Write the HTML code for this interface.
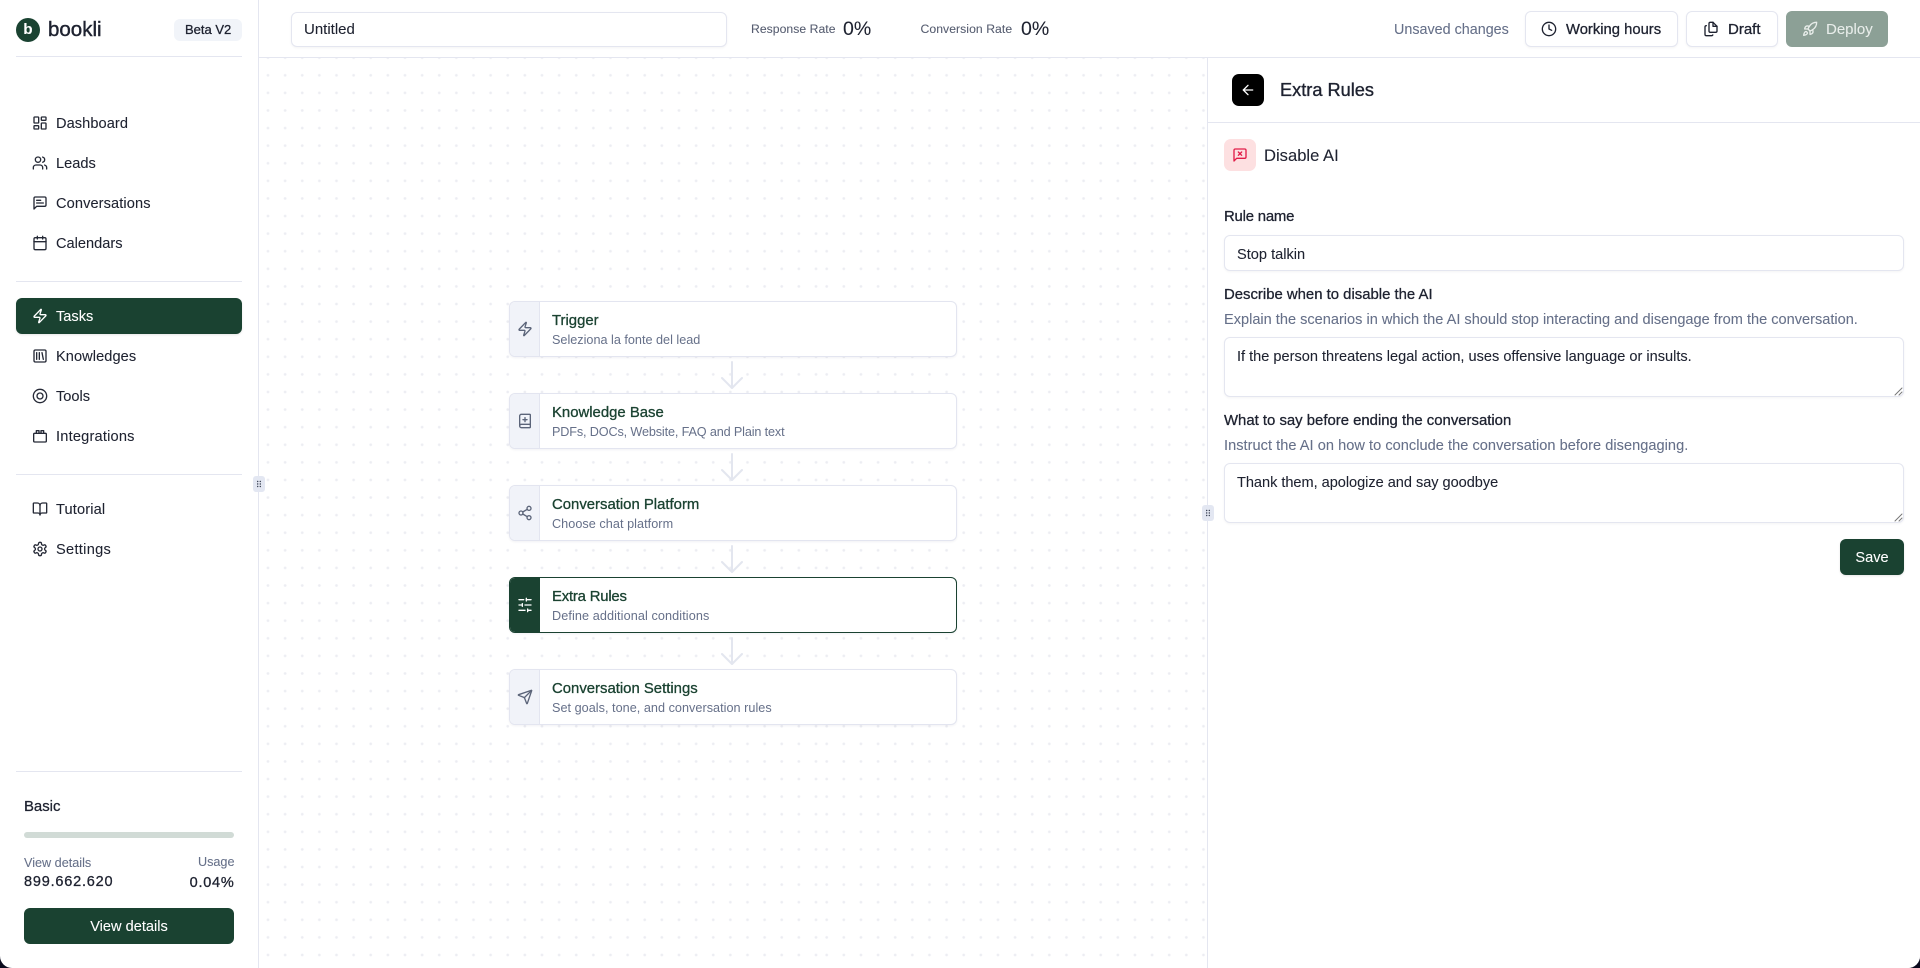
<!DOCTYPE html>
<html><head><meta charset="utf-8"><title>bookli</title>
<style>
*{box-sizing:border-box;margin:0;padding:0}
html,body{width:1920px;height:968px;overflow:hidden;background:#0b0b1e}
body{font-family:"Liberation Sans",Arial,sans-serif;color:#1e2230}
#app{position:absolute;left:0;top:0;width:1920px;height:968px;background:#fff;border-radius:0 0 12px 12px;overflow:hidden}
.a{position:absolute}
.t{position:absolute;white-space:nowrap;line-height:20px;height:20px;font-size:14.6px;letter-spacing:0;margin-top:1px;-webkit-text-stroke:.08px currentColor}
.n{margin-top:0}
.m{font-size:14.9px;font-weight:400;-webkit-text-stroke:.3px currentColor}
.ln{position:absolute;background:#e4e6f0}
svg{position:absolute;fill:none;stroke:currentColor;stroke-width:2;stroke-linecap:round;stroke-linejoin:round}
.nv svg{width:16px;height:16px;left:32px;color:#252936}
.box{position:absolute;background:#fff;border:1px solid #e4e6f0;border-radius:6px;box-shadow:0 1px 2px rgba(30,35,60,.05)}
.card{position:absolute;left:509px;width:448px;height:56px;background:#fff;border:1px solid #e3e5f0;border-radius:6px;overflow:hidden;box-shadow:0 1px 2px rgba(30,35,60,.06)}
.card i{position:absolute;left:0;top:0;bottom:0;width:30px;background:#f1f3f9;border-right:1px solid #e3e5f0}
.card svg{left:7px;top:19px;width:16px;height:16px;color:#5b6479}
.card b{position:absolute;left:42px;top:9px;line-height:20px;font-size:14.9px;font-weight:400;color:#1a4231;white-space:nowrap;-webkit-text-stroke:.3px #1a4231}
.card span{position:absolute;left:42px;top:28px;line-height:20px;font-size:12.65px;color:#667089;white-space:nowrap}
.arr{left:720px;width:24px;height:28px;color:#e3e6ef;stroke-width:2}
.sub{color:#667089}
.dots{position:absolute;top:58px;height:910px;background-image:radial-gradient(circle at center,#ebebf1 0,#eeeff4 1.1px,rgba(255,255,255,0) 1.7px);background-size:17.14px 17.6px}
</style></head><body>
<div id="app">
<!-- canvas -->
<div class="dots" style="left:259px;width:561px;background-position:.43px 8.5px"></div>
<div class="dots" style="left:820px;width:387px;background-position:-1.87px 8.5px"></div>

<!-- sidebar -->
<div class="ln" style="left:258px;top:0;width:1px;height:968px"></div>
<div class="a" style="left:16px;top:18px;width:24px;height:24px;border-radius:50%;background:#1a4231"></div>
<div class="t n" style="left:16px;top:20px;width:24px;text-align:center;color:#fff;font-weight:700;font-size:15px">b</div>
<div class="t m n" style="left:48px;top:20px;font-size:20.5px;-webkit-text-stroke:.4px #1e2230;color:#1e2230">bookli</div>
<div class="a" style="left:174px;top:19px;width:68px;height:22px;border-radius:6px;background:#f1f4f9"></div>
<div class="t m n" style="left:185px;top:20px;font-size:13px">Beta V2</div>
<div class="ln" style="left:16px;top:56px;width:226px;height:1px"></div>

<div class="nv">
<svg viewBox="0 0 24 24" style="top:115px"><rect x="3" y="3" width="7" height="9" rx="1"/><rect x="14" y="3" width="7" height="5" rx="1"/><rect x="14" y="12" width="7" height="9" rx="1"/><rect x="3" y="16" width="7" height="5" rx="1"/></svg>
<div class="t" style="left:56px;top:113px;letter-spacing:.07px">Dashboard</div>
<svg viewBox="0 0 24 24" style="top:155px"><path d="M16 21v-2a4 4 0 0 0-4-4H6a4 4 0 0 0-4 4v2"/><circle cx="9" cy="7" r="4"/><path d="M22 21v-2a4 4 0 0 0-3-3.87"/><path d="M16 3.13a4 4 0 0 1 0 7.75"/></svg>
<div class="t" style="left:56px;top:153px">Leads</div>
<svg viewBox="0 0 24 24" style="top:195px"><path d="M21 15a2 2 0 0 1-2 2H7l-4 4V5a2 2 0 0 1 2-2h14a2 2 0 0 1 2 2z"/><path d="M13 8H7"/><path d="M17 12H7"/></svg>
<div class="t" style="left:56px;top:193px;letter-spacing:.1px">Conversations</div>
<svg viewBox="0 0 24 24" style="top:235px"><path d="M8 2v4"/><path d="M16 2v4"/><rect x="3" y="4" width="18" height="18" rx="2"/><path d="M3 10h18"/></svg>
<div class="t" style="left:56px;top:233px">Calendars</div>
</div>
<div class="ln" style="left:16px;top:281px;width:226px;height:1px"></div>

<div class="a" style="left:16px;top:298px;width:226px;height:36px;border-radius:6px;background:#1a4231;box-shadow:0 1px 2px rgba(0,0,0,.1)"></div>
<div class="nv">
<svg viewBox="0 0 24 24" style="top:308px;color:#fff"><path d="M4 14a1 1 0 0 1-.78-1.63l9.9-10.2a.5.5 0 0 1 .86.46l-1.92 6.02A1 1 0 0 0 13 10h7a1 1 0 0 1 .78 1.63l-9.9 10.2a.5.5 0 0 1-.86-.46l1.92-6.02A1 1 0 0 0 11 14z"/></svg>
<div class="t" style="left:56px;top:306px;color:#fff">Tasks</div>
<svg viewBox="0 0 24 24" style="top:348px"><rect x="3" y="3" width="18" height="18" rx="2"/><path d="M7 7v10"/><path d="M11 7v10"/><path d="m15 7 2 10"/></svg>
<div class="t" style="left:56px;top:346px;letter-spacing:.07px">Knowledges</div>
<svg viewBox="0 0 24 24" style="top:388px"><path d="M12 2 20.500 6.800a1.500 1.500 0 0 1 .8 1.300v7.800a1.500 1.500 0 0 1-.8 1.300L12 22l-8.500-4.800a1.500 1.500 0 0 1-.8-1.300V8.100a1.500 1.500 0 0 1 .8-1.300z" stroke-width="0"/><circle cx="12" cy="12" r="10"/><circle cx="12" cy="12" r="4.500"/></svg>
<div class="t" style="left:56px;top:386px">Tools</div>
<svg viewBox="0 0 24 24" style="top:428px"><rect x="2.500" y="8" width="19" height="13" rx="1.500"/><path d="M6.500 8V4h4v4"/><path d="M13.500 8V4h4v4"/></svg>
<div class="t" style="left:56px;top:426px;letter-spacing:.2px">Integrations</div>
</div>
<div class="ln" style="left:16px;top:474px;width:226px;height:1px"></div>
<div class="nv">
<svg viewBox="0 0 24 24" style="top:501px"><path d="M12 7v14"/><path d="M3 18a1 1 0 0 1-1-1V4a1 1 0 0 1 1-1h5a4 4 0 0 1 4 4 4 4 0 0 1 4-4h5a1 1 0 0 1 1 1v13a1 1 0 0 1-1 1h-6a3 3 0 0 0-3 3 3 3 0 0 0-3-3z"/></svg>
<div class="t" style="left:56px;top:499px;letter-spacing:.15px">Tutorial</div>
<svg viewBox="0 0 24 24" style="top:541px"><path d="M12.220 2h-.44a2 2 0 0 0-2 2v.18a2 2 0 0 1-1 1.730l-.43.25a2 2 0 0 1-2 0l-.15-.08a2 2 0 0 0-2.730.73l-.22.38a2 2 0 0 0 .73 2.730l.15.1a2 2 0 0 1 1 1.720v.51a2 2 0 0 1-1 1.740l-.15.09a2 2 0 0 0-.73 2.730l.22.38a2 2 0 0 0 2.730.73l.15-.08a2 2 0 0 1 2 0l.43.25a2 2 0 0 1 1 1.730V20a2 2 0 0 0 2 2h.44a2 2 0 0 0 2-2v-.18a2 2 0 0 1 1-1.730l.43-.25a2 2 0 0 1 2 0l.15.08a2 2 0 0 0 2.730-.73l.22-.39a2 2 0 0 0-.73-2.730l-.15-.08a2 2 0 0 1-1-1.740v-.5a2 2 0 0 1 1-1.740l.15-.09a2 2 0 0 0 .73-2.730l-.22-.38a2 2 0 0 0-2.730-.73l-.15.08a2 2 0 0 1-2 0l-.43-.25a2 2 0 0 1-1-1.730V4a2 2 0 0 0-2-2z"/><circle cx="12" cy="12" r="3"/></svg>
<div class="t" style="left:56px;top:539px;letter-spacing:.3px">Settings</div>
</div>

<div class="ln" style="left:16px;top:771px;width:226px;height:1px"></div>
<div class="t m" style="left:24px;top:796px">Basic</div>
<div class="a" style="left:24px;top:832px;width:210px;height:6px;border-radius:3px;background:#d1dbd6"></div>
<div class="t sub n" style="left:24px;top:853px;font-size:12.65px">View details</div>
<div class="t sub n" style="right:1685.500px;top:852px;font-size:12.65px">Usage</div>
<div class="t m" style="left:24px;top:871px;font-size:14.5px;letter-spacing:.79px">899.662.620</div>
<div class="t m" style="right:1685.500px;top:872px;font-size:14.5px;letter-spacing:.75px">0.04%</div>
<div class="a" style="left:24px;top:908px;width:210px;height:36px;border-radius:6px;background:#1a4231"></div>
<div class="t" style="left:24px;top:916px;width:210px;text-align:center;color:#fff">View details</div>

<!-- handles -->
<div class="a" style="left:253px;top:476px;width:12px;height:16px;border-radius:3px;background:#e3e7f2"></div>
<svg class="a" viewBox="0 0 12 16" style="left:253px;top:476px;width:12px;height:16px;stroke:none;fill:#333a4d"><circle cx="4.700" cy="5.500" r=".7"/><circle cx="7.300" cy="5.500" r=".7"/><circle cx="4.700" cy="8" r=".7"/><circle cx="7.300" cy="8" r=".7"/><circle cx="4.700" cy="10.500" r=".7"/><circle cx="7.300" cy="10.500" r=".7"/></svg>

<!-- header -->
<div class="ln" style="left:259px;top:57px;width:1661px;height:1px"></div>
<div class="box" style="left:291px;top:12px;width:436px;height:35px"></div>
<div class="t" style="left:304px;top:19px;font-size:15px">Untitled</div>
<div class="t n" style="left:751px;top:19px;font-size:12.2px;color:#565d70;letter-spacing:.04px">Response Rate</div>
<div class="t n" style="left:843px;top:19px;font-size:19.500px">0%</div>
<div class="t n" style="left:920.500px;top:19px;font-size:12.2px;color:#565d70;letter-spacing:.06px">Conversion Rate</div>
<div class="t n" style="left:1021px;top:19px;font-size:19.500px">0%</div>

<div class="t sub" style="left:1394px;top:19px;font-size:14.35px">Unsaved changes</div>
<div class="box" style="left:1525px;top:11px;width:153px;height:36px"></div>
<svg viewBox="0 0 24 24" style="left:1541px;top:21px;width:16px;height:16px"><circle cx="12" cy="12" r="10"/><polyline points="12 6 12 12 16 14"/></svg>
<div class="t m" style="left:1566px;top:19px;font-size:14.8px">Working hours</div>
<div class="box" style="left:1686px;top:11px;width:92px;height:36px"></div>
<svg viewBox="0 0 24 24" style="left:1703px;top:21px;width:16px;height:16px"><path d="M15 2h-4a2 2 0 0 0-2 2v11a2 2 0 0 0 2 2h8a2 2 0 0 0 2-2V8z"/><path d="M15 2v6h6"/><path d="M5 7a2 2 0 0 0-2 2v11a2 2 0 0 0 2 2h8a2 2 0 0 0 1.700-1"/></svg>
<div class="t m" style="left:1728px;top:19px;font-size:15px">Draft</div>
<div class="a" style="left:1786px;top:11px;width:102px;height:36px;border-radius:6px;background:#8ca096"></div>
<svg viewBox="0 0 24 24" style="left:1802px;top:21px;width:16px;height:16px;color:#e8edea"><path d="M4.500 16.500c-1.500 1.260-2 5-2 5s3.740-.5 5-2c.71-.84.7-2.130-.09-2.910a2.180 2.180 0 0 0-2.910-.09z"/><path d="m12 15-3-3a22 22 0 0 1 2-3.950A12.880 12.880 0 0 1 22 2c0 2.720-.78 7.500-6 11a22.350 22.350 0 0 1-4 2z"/><path d="M9 12H4s.55-3.030 2-4c1.620-1.080 5 0 5 0"/><path d="M12 15v5s3.030-.55 4-2c1.080-1.620 0-5 0-5"/></svg>
<div class="t" style="left:1826px;top:19px;font-size:15px;color:#e8edea">Deploy</div>

<!-- cards -->
<div class="card" style="top:301px"><i></i><svg viewBox="0 0 24 24"><path d="M4 14a1 1 0 0 1-.78-1.630l9.900-10.200a.5.5 0 0 1 .86.46l-1.920 6.020A1 1 0 0 0 13 10h7a1 1 0 0 1 .78 1.630l-9.900 10.200a.5.5 0 0 1-.86-.46l1.920-6.020A1 1 0 0 0 11 14z"/></svg><b>Trigger</b><span>Seleziona la fonte del lead</span></div>
<div class="card" style="top:393px"><i></i><svg viewBox="0 0 24 24"><path d="M12 7v6"/><path d="M15 10H9"/><path d="M4 19.500v-15A2.500 2.500 0 0 1 6.500 2H19a1 1 0 0 1 1 1v18a1 1 0 0 1-1 1H6.500a1 1 0 0 1 0-5H20"/></svg><b>Knowledge Base</b><span style="letter-spacing:-.14px">PDFs, DOCs, Website, FAQ and Plain text</span></div>
<div class="card" style="top:485px"><i></i><svg viewBox="0 0 24 24"><circle cx="18" cy="5" r="3"/><circle cx="6" cy="12" r="3"/><circle cx="18" cy="19" r="3"/><line x1="8.590" y1="13.510" x2="15.420" y2="17.490"/><line x1="15.410" y1="6.510" x2="8.590" y2="10.490"/></svg><b>Conversation Platform</b><span style="letter-spacing:.05px">Choose chat platform</span></div>
<div class="card" style="top:577px;border-color:#1a4231"><i style="background:#1a4231;border-color:#1a4231"></i><svg viewBox="0 0 24 24" style="color:#fff"><path d="M21 4h-7"/><path d="M10 4H3"/><path d="M21 12h-9"/><path d="M8 12H3"/><path d="M21 20h-5"/><path d="M12 20H3"/><path d="M14 2v4"/><path d="M8 10v4"/><path d="M16 18v4"/></svg><b style="letter-spacing:-.2px">Extra Rules</b><span style="letter-spacing:.1px">Define additional conditions</span></div>
<div class="card" style="top:669px"><i></i><svg viewBox="0 0 24 24"><path d="M14.536 21.686a.5.5 0 0 0 .937-.024l6.500-19a.496.496 0 0 0-.635-.635l-19 6.500a.5.5 0 0 0-.024.937l7.930 3.180a2 2 0 0 1 1.112 1.110z"/><path d="m21.854 2.147-10.940 10.939"/></svg><b>Conversation Settings</b><span style="letter-spacing:.03px">Set goals, tone, and conversation rules</span></div>
<svg class="arr" viewBox="0 0 24 28" style="top:361px"><path d="M12 1v26"/><path d="M2 17l10 10 10-10"/></svg>
<svg class="arr" viewBox="0 0 24 28" style="top:453px"><path d="M12 1v26"/><path d="M2 17l10 10 10-10"/></svg>
<svg class="arr" viewBox="0 0 24 28" style="top:545px"><path d="M12 1v26"/><path d="M2 17l10 10 10-10"/></svg>
<svg class="arr" viewBox="0 0 24 28" style="top:637px"><path d="M12 1v26"/><path d="M2 17l10 10 10-10"/></svg>

<!-- right panel -->
<div class="a" style="left:1207px;top:58px;width:713px;height:910px;background:#fff;border-left:1px solid #e4e6f0"></div>
<div class="a" style="left:1202px;top:505px;width:12px;height:16px;border-radius:3px;background:#e3e7f2"></div>
<svg class="a" viewBox="0 0 12 16" style="left:1202px;top:505px;width:12px;height:16px;stroke:none;fill:#333a4d"><circle cx="4.700" cy="5.500" r=".7"/><circle cx="7.300" cy="5.500" r=".7"/><circle cx="4.700" cy="8" r=".7"/><circle cx="7.300" cy="8" r=".7"/><circle cx="4.700" cy="10.500" r=".7"/><circle cx="7.300" cy="10.500" r=".7"/></svg>
<div class="ln" style="left:1208px;top:122px;width:712px;height:1px"></div>
<div class="a" style="left:1232px;top:74px;width:32px;height:32px;border-radius:7px;background:#000"></div>
<svg viewBox="0 0 24 24" style="left:1240px;top:82px;width:16px;height:16px;color:#fff"><path d="m12 19-7-7 7-7"/><path d="M19 12H5"/></svg>
<div class="t m n" style="left:1280px;top:80px;font-size:18.2px;-webkit-text-stroke:.35px #1e2230">Extra Rules</div>
<div class="a" style="left:1224px;top:139px;width:32px;height:32px;border-radius:7px;background:#fde0e1"></div>
<svg viewBox="0 0 24 24" style="left:1232px;top:147px;width:16px;height:16px;color:#e11d48"><path d="M21 15a2 2 0 0 1-2 2H7l-4 4V5a2 2 0 0 1 2-2h14a2 2 0 0 1 2 2z"/><path d="m14.500 7.500-5 5"/><path d="m9.500 7.500 5 5"/></svg>
<div class="t n" style="left:1264px;top:146px;font-size:16.6px">Disable AI</div>

<div class="t m" style="left:1224px;top:206px;letter-spacing:-.2px">Rule name</div>
<div class="box" style="left:1224px;top:235px;width:680px;height:36px"></div>
<div class="t" style="left:1237px;top:244px">Stop talkin</div>
<div class="t m" style="left:1224px;top:284px">Describe when to disable the AI</div>
<div class="t sub" style="left:1224px;top:309px;font-size:14.57px">Explain the scenarios in which the AI should stop interacting and disengage from the conversation.</div>
<div class="box" style="left:1224px;top:337px;width:680px;height:60px"></div>
<div class="t" style="left:1237px;top:346px;font-size:14.57px">If the person threatens legal action, uses offensive language or insults.</div>
<svg viewBox="0 0 10 10" style="left:1893px;top:386px;width:10px;height:10px;color:#777;stroke-width:1"><path d="M9 2 2 9"/><path d="M9 6 6 9"/></svg>
<div class="t m" style="left:1224px;top:410px">What to say before ending the conversation</div>
<div class="t sub" style="left:1224px;top:435px;font-size:14.57px;letter-spacing:.04px">Instruct the AI on how to conclude the conversation before disengaging.</div>
<div class="box" style="left:1224px;top:463px;width:680px;height:60px"></div>
<div class="t" style="left:1237px;top:472px;font-size:14.57px;letter-spacing:-.03px">Thank them, apologize and say goodbye</div>
<svg viewBox="0 0 10 10" style="left:1893px;top:512px;width:10px;height:10px;color:#777;stroke-width:1"><path d="M9 2 2 9"/><path d="M9 6 6 9"/></svg>
<div class="a" style="left:1840px;top:539px;width:64px;height:36px;border-radius:6px;background:#1a4231;box-shadow:0 1px 2px rgba(0,0,0,.1)"></div>
<div class="t" style="left:1840px;top:547px;width:64px;text-align:center;color:#fff">Save</div>
</div>
</body></html>
